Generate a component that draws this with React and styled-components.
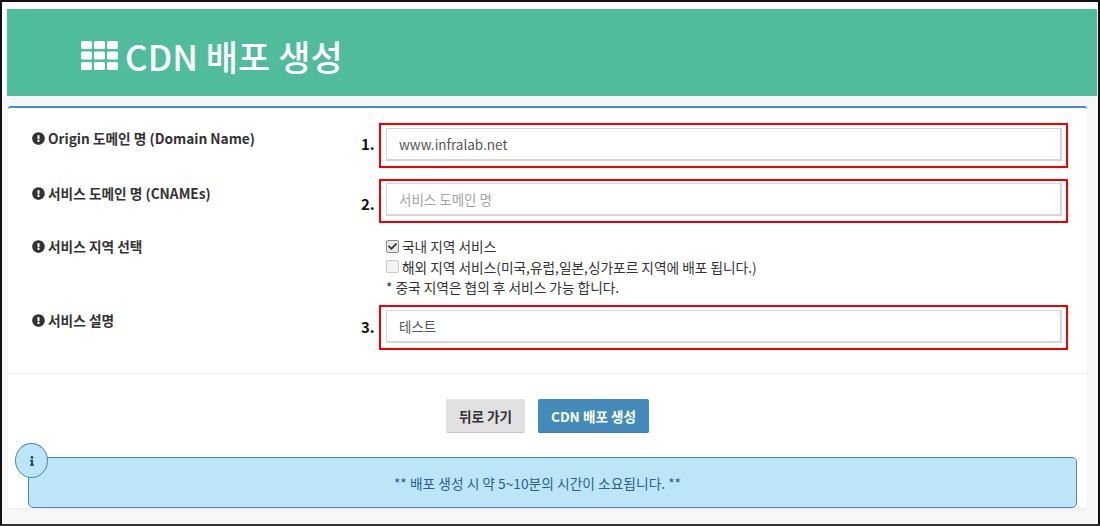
import React from 'react';
import styled, { createGlobalStyle } from 'styled-components';
import { FaExclamationCircle, FaInfo, FaCheck } from 'react-icons/fa';

const Global = createGlobalStyle`
  html, body { margin: 0; padding: 0; background: #fff; }
  body { font-family: "Noto Sans CJK KR", "Noto Sans", sans-serif; color: #333; }
  * { box-sizing: border-box; }
`;

const Frame = styled.div`
  width: 1100px; height: 526px; overflow: hidden;
  border: 2px solid #111; border-bottom: 2px solid #333;
  background: linear-gradient(#fff 0, #fff 94px, #f7f7f7 94px);
  padding: 7px 1px 0 5px;
`;
const Header = styled.header`
  height: 87px; background: #4fbc9c; color: #fff;
  display: flex; align-items: center; padding-left: 74px; gap: 7px;
  margin-bottom: 10px;
  svg { margin-top: 6px; }
`;
const Title = styled.h1`
  margin: 0; font-size: 35.1px; font-weight: 500; line-height: 1;
  position: relative; top: 3px;
`;
const Panel = styled.section`
  width: 1079px; height: 402px; margin-left: 1px; background: #fff;
  border-top: 2px solid #428bca; border-radius: 3px 3px 0 0;
  box-shadow: 0 1px 2px rgba(0,0,0,.05);
  position: relative;
`;
const Form = styled.div`
  height: 266px; border-bottom: 1px solid #f1f1f1;
  padding: 15px 19px 0 24px;
  display: grid; grid-template-columns: 329px 18px 689px;
  grid-template-rows: 45px 56px 81px 45px;
  align-content: start;
`;
const Label = styled.label`
  font-size: 13.7px; font-weight: 700; color: #333; line-height: 20px;
  display: flex; align-items: center; gap: 3px; align-self: start;
  margin-top: ${p => p.$top || 0}px;
  svg { width: 13px; height: 13px; flex: none; }
`;
const Num = styled.span`
  font-size: 15px; font-weight: 700; color: #111; line-height: 20px;
  align-self: start; margin-top: ${p => p.$top}px;
`;
const RedBox = styled.div`
  border: 2px solid #f00000; height: ${p => p.$h || 45}px;
  padding: ${p => p.$pad || 3}px 4px 0 5px;
  margin-top: ${p => p.$top || 0}px;
`;
const Field = styled.div`
  height: 33px; border: 1px solid #d6d6d6; border-width: 1px 2px 2px 1px; padding: 0 12px;
  font-size: 13.5px; line-height: 31px; color: ${p => p.$ph ? '#a5a5a5' : '#555'};
`;
const Checks = styled.div`
  grid-column: 3; padding-left: 7px; font-size: 13.7px; color: #333; line-height: 20.5px;
  padding-top: 12px;
`;
const CheckRow = styled.div`display: flex; align-items: center; gap: 3px;`;
const Box = styled.span`
  width: 13px; height: 13px; border-radius: 2px; flex: none;
  border: 1px solid ${p => p.$on ? '#8a8a8a' : '#c8c8c8'};
  background: ${p => p.$on ? '#e8e8e8' : '#f4f4f4'};
  display: flex; align-items: center; justify-content: center;
  svg { width: 9px; height: 9px; color: #333; }
`;
const Actions = styled.div`
  display: flex; justify-content: center; gap: 13px; padding-top: 25px;
`;
const Button = styled.button`
  font-family: inherit; font-size: 13.6px; font-weight: 700; height: 34px; border-radius: 2px;
  width: ${p => p.$w}px; padding: 0;
  border: none; border-bottom: 1px solid ${p => p.$primary ? '#357ea8' : '#c4c4c4'};
  background: ${p => p.$primary ? '#428bba' : '#e1e1e1'};
  color: ${p => p.$primary ? '#fff' : '#333'};
`;
const Info = styled.div`
  position: absolute; left: 20px; top: 349px; width: 1049px; height: 51px;
  background: #bde5f8; border: 1.5px solid #4a86b8; border-radius: 5px;
  display: flex; align-items: center; justify-content: center;
  font-size: 13.75px; color: #2b5f8f; padding: 1px 30px 0 0;
`;
const InfoBadge = styled.span`
  position: absolute; left: -14px; top: -15px; width: 33px; height: 35px; border-radius: 50%;
  background: #bde5f8; border: 1.5px solid #4a86b8; color: #1d4e79;
  display: flex; align-items: center; justify-content: center;
  svg { width: 10px; height: 10px; }
`;
const GridIcon = () => (
  <svg width="37" height="29" viewBox="0 0 37 29" fill="#fff" aria-hidden="true">
    {[0, 10.5, 21].map(y => [0, 13, 26].map(x => (
      <rect key={`${x}-${y}`} x={x} y={y} width="11" height="8" rx="1.5" />
    )))}
  </svg>
);

export default function App() {
  return (
    <Frame>
      <Global />
      <Header>
        <GridIcon />
        <Title>CDN 배포 생성</Title>
      </Header>
      <Panel>
        <Form>
          <Label $top={5}><FaExclamationCircle />Origin 도메인 명 (Domain Name)</Label>
          <Num $top={11}>1.</Num>
          <RedBox><Field>www.infralab.net</Field></RedBox>

          <Label $top={15}><FaExclamationCircle />서비스 도메인 명 (CNAMEs)</Label>
          <Num $top={26}>2.</Num>
          <RedBox $top={11} $h={44} $pad={2}><Field $ph>서비스 도메인 명</Field></RedBox>

          <Label $top={12}><FaExclamationCircle />서비스 지역 선택</Label>
          <Checks>
            <CheckRow><Box $on><FaCheck /></Box>국내 지역 서비스</CheckRow>
            <CheckRow><Box />해외 지역 서비스(미국,유럽,일본,싱가포르 지역에 배포 됩니다.)</CheckRow>
            <div>* 중국 지역은 협의 후 서비스 가능 합니다.</div>
          </Checks>

          <Label $top={5}><FaExclamationCircle />서비스 설명</Label>
          <Num $top={12}>3.</Num>
          <RedBox><Field>테스트</Field></RedBox>
        </Form>
        <Actions>
          <Button $w={79}>뒤로 가기</Button>
          <Button $w={111} $primary>CDN 배포 생성</Button>
        </Actions>
        <Info>
          <InfoBadge><FaInfo /></InfoBadge>
          ** 배포 생성 시 약 5~10분의 시간이 소요됩니다. **
        </Info>
      </Panel>
    </Frame>
  );
}
